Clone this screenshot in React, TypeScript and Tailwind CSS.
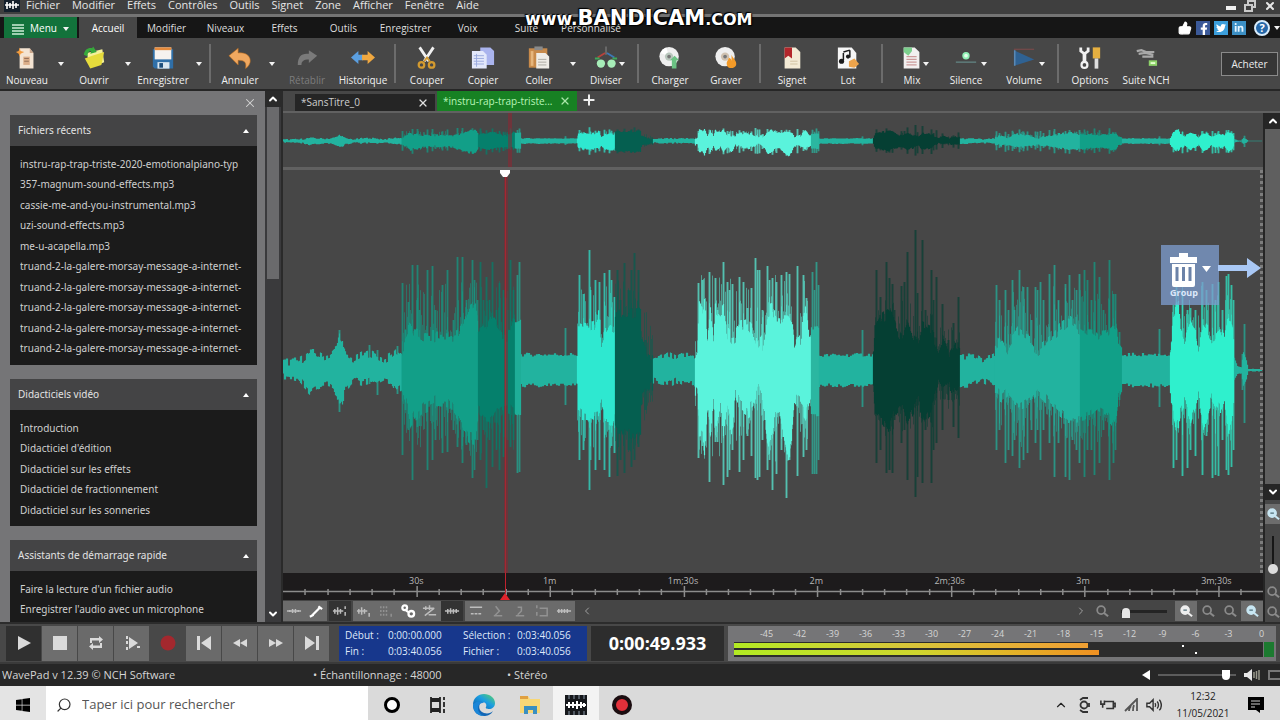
import React from "react";
import { ChevronDown, ChevronUp, Search, X, Plus, ThumbsUp } from "lucide-react";
import { FaFacebookF, FaTwitter, FaLinkedinIn, FaWindows } from "react-icons/fa";

type Pt = [number, number, number];
type Segment = { x0: number; x1: number; color: string; noise: number; fuzz?: number; core: Pt[]; spikes?: Pt[] };

const TEAL = "#22b39f";

/* Each point is [x, height above the axis, height below the axis]. */
const SEGMENTS: Segment[] = [
  {
    x0: 283, x1: 402, color: TEAL, noise: 9,
    core: [[283, 7, 6], [298, 8, 8], [303, 11, 14], [309, 16, 20], [314, 16, 16], [322, 12, 13], [329, 14, 14], [334, 18, 18], [337, 26, 28], [339, 34, 36], [341, 32, 33], [343, 20, 26], [346, 12, 16], [354, 9, 8], [362, 14, 11], [369, 16, 10], [376, 13, 13], [384, 9, 9], [392, 14, 11], [396, 18, 18], [402, 14, 16]],
    spikes: [[339, 40, 42], [369, 25, 14], [377, 20, 25], [397, 24, 24]],
  },
  {
    x0: 402, x1: 478, color: "#129f88", noise: 14, fuzz: 88,
    core: [[402, 18, 18], [406, 34, 30], [410, 43, 50], [414, 34, 44], [424, 31, 36], [436, 32, 30], [448, 32, 32], [458, 34, 46], [464, 46, 60], [469, 62, 66], [475, 66, 68], [478, 36, 38]],
    spikes: [[402, 87, 85], [405, 40, 40], [408, 68, 60], [412, 105, 110], [417, 105, 57], [419, 60, 56], [427, 100, 100], [432, 104, 90], [435, 60, 70], [442, 85, 83], [447, 100, 82], [453, 50, 60], [457, 113, 77], [462, 113, 93], [466, 70, 75], [472, 110, 108], [474, 90, 100], [477, 70, 70]],
  },
  {
    x0: 478, x1: 515, color: "#05806c", noise: 12, fuzz: 90,
    core: [[478, 38, 40], [485, 42, 44], [490, 54, 48], [496, 42, 40], [502, 32, 36], [510, 33, 38], [515, 56, 42]],
    spikes: [[480, 108, 90], [483, 70, 60], [486, 93, 118], [489, 70, 70], [492, 108, 97], [496, 60, 80], [499, 87, 100], [503, 80, 87], [507, 60, 70], [510, 110, 77], [513, 80, 70]],
  },
  { x0: 515, x1: 521, color: "#1fae98", noise: 3, core: [[515, 48, 44], [521, 50, 46]], spikes: [[517, 95, 103], [519, 108, 102]] },
  { x0: 521, x1: 577, color: TEAL, noise: 4, core: [[521, 15, 15], [577, 15, 15]], spikes: [[565, 42, 35]] },
  {
    x0: 577, x1: 615, color: "#2ee8d0", noise: 12, fuzz: 85,
    core: [[577, 16, 18], [578, 44, 40], [582, 42, 43], [588, 40, 44], [593, 42, 46], [598, 54, 44], [601, 26, 34], [605, 36, 44], [609, 42, 56], [612, 40, 54], [615, 38, 40]],
    spikes: [[579, 95, 90], [583, 76, 80], [589, 120, 120], [590, 80, 90], [595, 90, 100], [599, 88, 90], [604, 97, 100], [609, 100, 107], [611, 90, 76], [614, 73, 83]],
  },
  {
    x0: 615, x1: 653, color: "#055f50", noise: 12, fuzz: 92,
    core: [[615, 54, 56], [622, 52, 58], [634, 56, 66], [640, 56, 58], [641, 26, 28], [647, 14, 20], [653, 10, 14]],
    spikes: [[617, 100, 106], [620, 70, 90], [624, 107, 103], [628, 80, 80], [631, 100, 97], [634, 117, 90], [638, 100, 77], [645, 30, 40]],
  },
  { x0: 653, x1: 695, color: TEAL, noise: 8, core: [[653, 9, 10], [668, 14, 14], [676, 10, 10], [682, 14, 13], [695, 13, 12]] },
  {
    x0: 695, x1: 811, color: "#5af3dc", noise: 18, fuzz: 96,
    core: [[695, 16, 16], [697, 20, 18], [699, 64, 72], [702, 56, 56], [704, 64, 78], [707, 30, 36], [710, 62, 64], [713, 20, 28], [715, 60, 60], [720, 54, 32], [723, 58, 62], [727, 36, 36], [732, 30, 58], [735, 32, 26], [740, 40, 36], [747, 42, 40], [752, 36, 36], [757, 20, 16], [762, 26, 28], [768, 58, 82], [772, 60, 62], [775, 44, 46], [780, 44, 42], [784, 58, 72], [787, 58, 84], [791, 52, 72], [794, 20, 28], [800, 30, 34], [805, 60, 44], [809, 32, 32], [811, 28, 26]],
    spikes: [[698, 87, 88], [702, 90, 76], [709, 98, 112], [715, 92, 72], [717, 60, 72], [723, 108, 115], [727, 88, 107], [729, 80, 100], [732, 86, 80], [739, 93, 102], [743, 88, 90], [747, 62, 66], [751, 82, 86], [755, 112, 108], [757, 100, 110], [759, 100, 107], [762, 60, 70], [767, 104, 100], [769, 90, 90], [772, 92, 120], [776, 88, 104], [781, 95, 80], [786, 98, 128], [789, 96, 90], [797, 104, 106], [803, 95, 87], [806, 72, 80]],
  },
  { x0: 811, x1: 819, color: "#2bb7a1", noise: 4, core: [[811, 42, 44], [819, 42, 44]], spikes: [[812, 98, 104], [814, 80, 104], [816, 108, 104], [818, 85, 90]] },
  { x0: 819, x1: 873, color: TEAL, noise: 4, core: [[819, 14, 15], [873, 15, 15]], spikes: [[862, 40, 37]] },
  {
    x0: 873, x1: 960, color: "#053f33", noise: 12, fuzz: 70,
    core: [[873, 16, 18], [875, 42, 38], [880, 50, 44], [888, 56, 58], [893, 48, 44], [897, 38, 38], [902, 30, 32], [907, 44, 50], [913, 32, 38], [918, 30, 28], [922, 42, 50], [930, 38, 40], [935, 28, 24], [938, 14, 8], [943, 26, 20], [949, 12, 12], [955, 24, 24], [960, 20, 20]],
    spikes: [[876, 100, 93], [880, 73, 80], [886, 108, 103], [889, 92, 100], [892, 86, 103], [894, 60, 50], [901, 84, 73], [904, 88, 60], [907, 118, 110], [915, 140, 127], [917, 77, 107], [922, 130, 113], [925, 60, 60], [931, 100, 113], [933, 70, 80], [936, 93, 73], [942, 66, 60], [948, 30, 30], [953, 47, 57], [958, 73, 68]],
  },
  { x0: 960, x1: 995, color: TEAL, noise: 7, core: [[960, 13, 15], [973, 13, 13], [982, 9, 9], [995, 13, 15]] },
  {
    x0: 995, x1: 1080, color: TEAL, noise: 13, fuzz: 84,
    core: [[995, 22, 22], [1002, 27, 26], [1007, 18, 22], [1010, 27, 30], [1017, 36, 36], [1030, 27, 30], [1037, 17, 21], [1047, 27, 30], [1057, 38, 38], [1068, 48, 48], [1080, 39, 46]],
    spikes: [[996, 85, 80], [999, 70, 60], [1005, 80, 93], [1008, 60, 80], [1012, 90, 86], [1014, 60, 70], [1019, 100, 98], [1023, 83, 90], [1027, 83, 83], [1031, 50, 60], [1035, 83, 73], [1037, 80, 60], [1040, 88, 90], [1043, 70, 60], [1049, 96, 73], [1054, 105, 107], [1058, 70, 73], [1065, 86, 107], [1069, 95, 110], [1072, 70, 70], [1076, 80, 80], [1079, 96, 93]],
  },
  {
    x0: 1080, x1: 1122, color: "#11a088", noise: 9, fuzz: 80,
    core: [[1080, 41, 47], [1092, 37, 43], [1098, 32, 38], [1106, 36, 42], [1112, 42, 52], [1116, 40, 42], [1118, 22, 24], [1122, 16, 16]],
    spikes: [[1084, 100, 107], [1087, 90, 80], [1091, 70, 80], [1094, 108, 105], [1099, 93, 93], [1103, 60, 60], [1109, 110, 110], [1113, 76, 93], [1115, 76, 80], [1119, 38, 30]],
  },
  { x0: 1122, x1: 1170, color: TEAL, noise: 4, core: [[1122, 15, 15], [1170, 15, 15]], spikes: [[1159, 41, 37]] },
  {
    x0: 1170, x1: 1234, color: "#2ff0cd", noise: 12, fuzz: 85,
    core: [[1170, 18, 18], [1172, 38, 38], [1175, 64, 56], [1178, 62, 52], [1180, 36, 38], [1184, 28, 30], [1190, 43, 48], [1195, 34, 34], [1198, 20, 24], [1203, 44, 56], [1207, 39, 43], [1211, 26, 26], [1216, 34, 34], [1220, 40, 38], [1224, 28, 24], [1228, 54, 58], [1232, 42, 44], [1234, 18, 18]],
    spikes: [[1173, 65, 98], [1176, 85, 90], [1182, 80, 106], [1187, 60, 98], [1190, 62, 80], [1195, 60, 86], [1202, 88, 105], [1206, 80, 66], [1212, 86, 108], [1215, 70, 105], [1218, 88, 106], [1222, 60, 70], [1226, 94, 100], [1228, 96, 105], [1231, 85, 97], [1233, 70, 80]],
  },
  { x0: 1234, x1: 1262, color: TEAL, noise: 1, core: [[1234, 12, 10], [1237, 4, 4], [1241, 3, 3], [1243, 18, 16], [1246, 10, 10], [1248, 1, 1], [1262, 0, 1]], spikes: [[1244, 46, 53], [1242, 16, 20]] },
];

function jitter(x: number) {
  const v = Math.sin(x * 12.9898) * 43758.5453;
  return v - Math.floor(v);
}

function heightsAt(s: Segment, x: number) {
  let i = 0;
  while (i < s.core.length - 2 && s.core[i + 1][0] < x) i += 1;
  const [ax, au, ad] = s.core[i];
  const [bx, bu, bd] = s.core[i + 1];
  const t = Math.min(1, Math.max(0, (x - ax) / (bx - ax)));
  return [au + (bu - au) * t, ad + (bd - ad) * t];
}

function corePath(s: Segment, axis: number, scale: number) {
  let d = "";
  for (let x = s.x0; x < s.x1; x += 1) {
    const [u, l] = heightsAt(s, x);
    const up = Math.max(1, u + (jitter(Math.floor(x / 2)) - 0.4) * s.noise) * scale;
    const down = Math.max(1, l + (jitter(Math.floor(x / 2) + 500) - 0.4) * s.noise) * scale;
    d += `M${x + 0.5} ${axis - up}V${axis + down}`;
  }
  return d;
}

function fuzzPath(s: Segment, axis: number, scale: number) {
  if (!s.fuzz) return "";
  let d = "";
  for (let x = s.x0; x < s.x1; x += 1) {
    const [u, l] = heightsAt(s, x);
    const a = jitter(x + 90);
    const b = a * 0.7 + jitter(x + 900) * 0.3;
    const reach = u < 30 ? s.fuzz * 0.7 : s.fuzz;
    const up = u + Math.max(0, reach - u) * a * a;
    const down = l + Math.max(0, reach - l) * b * b;
    d += `M${x + 0.5} ${axis - up * scale}V${axis + down * scale}`;
  }
  return d;
}

function spikePath(s: Segment, axis: number, scale: number) {
  return (s.spikes ?? []).map(([x, u, l]) => `M${x + 0.5} ${axis - u * scale}V${axis + l * scale}`).join("");
}

function Wave({ axis, core, spike, box }: { axis: number; core: number; spike: number; box: string }) {
  return (
    <svg viewBox={box} preserveAspectRatio="none" className="block h-full w-full" aria-hidden="true">
      {SEGMENTS.map((s) => (
        <g key={s.x0} stroke={s.color}>
          <path d={fuzzPath(s, axis, spike)} strokeWidth="1" opacity="0.5" />
          <path d={spikePath(s, axis, spike)} strokeWidth="2.4" opacity="0.35" />
          <path d={spikePath(s, axis, spike)} strokeWidth="1.3" opacity="0.55" />
          <path d={corePath(s, axis, core)} strokeWidth="1.2" />
        </g>
      ))}
    </svg>
  );
}

const ICONS: Record<string, React.ReactNode> = {
  new: (
    <>
      <path d="M5 2h11l4 5v17H5z" fill="#f4e4d2" />
      <path d="M16 2l4 5h-4z" fill="#c9a58a" />
      <path d="M9 11h7v9H9z" fill="#dcae88" />
      <path d="M10 13h5M10 16h5" stroke="#8c6a55" />
      <path d="M5 1l1 4 4 1-4 2-1 3-1-3-3-2 3-1z" fill="#f29b3d" />
    </>
  ),
  open: (
    <>
      <path d="M5 7l17-4 2 14-15 6z" fill="#f5f19a" />
      <path d="M3 13l8-3 13-4-3 14-12 4z" fill="#e6dc3c" />
      <path d="M2 9C3 3 7 1 11 2l1-2 4 6-7 2 1-3C7 5 6 7 6 11z" fill="#37a93c" />
    </>
  ),
  save: (
    <>
      <path d="M2 3h22v21H4l-2-2z" fill="#2f6fa8" />
      <path d="M4 1h18v13H4z" fill="#f6f2ef" />
      <path d="M4 1h18v3H4z" fill="#e58a3c" />
      <path d="M7 17h13v7H7z" fill="#d9e6f0" />
      <path d="M9 18h4v5H9z" fill="#1d4d7a" />
    </>
  ),
  undo: <path d="M1 10l10-8v5c9-1 14 4 13 10-1 3-2 5-5 7 1-6 0-9-8-9v5z" fill="#f0a860" stroke="#b86a1c" strokeWidth="0.6" />,
  redo: <path d="M24 10L15 4v4c-8-1-12 3-12 12l4 0c0-4 2-6 8-6v4z" fill="#7a7a7a" />,
  history: (
    <>
      <path d="M0 12l8-7v4h5v6H8v4z" fill="#5b9fe0" />
      <path d="M26 12l-8-7v4h-6v6h6v4z" fill="#f0a840" />
    </>
  ),
  cut: (
    <>
      <path d="M5 1l10 15M20 1L10 16" stroke="#f1f1f1" strokeWidth="3" />
      <circle cx="7" cy="20" r="3" fill="none" stroke="#d39a2f" strokeWidth="2.4" />
      <circle cx="18" cy="20" r="3" fill="none" stroke="#d39a2f" strokeWidth="2.4" />
      <path d="M10 16l3-4 3 4" stroke="#d39a2f" strokeWidth="2" fill="none" />
    </>
  ),
  copy: (
    <>
      <path d="M10 1h11l4 4v15H10z" fill="#aab4ee" />
      <path d="M1 5h12l4 4v15H1z" fill="#e3e8fb" />
      <path d="M3 10h11M3 13h11M3 16h11M3 19h11M6 8v14" stroke="#98a7dc" />
    </>
  ),
  paste: (
    <>
      <path d="M2 2h20v21H2z" fill="#c88a4a" />
      <path d="M8 0h9v4H8z" fill="#8a8a8a" />
      <path d="M4 5h3v16H4z" fill="#e6b67c" />
      <path d="M10 7h10l4 4v13H10z" fill="#efece6" />
      <path d="M12 14h9M12 17h9M12 20h9" stroke="#aaa79f" />
    </>
  ),
  split: (
    <>
      <path d="M13 0v9" stroke="#777" strokeWidth="1.5" />
      <path d="M12 7L4 12" stroke="#b8423c" strokeWidth="2" />
      <path d="M14 7l8 5" stroke="#3c78b8" strokeWidth="2" />
      <circle cx="7.500" cy="18.500" r="4.500" fill="#a7edb8" />
      <circle cx="19" cy="18.500" r="4.500" fill="#a7edb8" />
      <path d="M1 13h5M20 13h5" stroke="#3fa85a" strokeWidth="2" />
    </>
  ),
  disc: (
    <>
      <circle cx="12" cy="11" r="10.5" fill="#eeeeee" />
      <path d="M12 11L3 7a10 10 0 016-6z" fill="#fff" />
      <circle cx="12" cy="11" r="4.5" fill="#b9c7bd" />
      <circle cx="12" cy="11" r="2" fill="#777" />
      <path d="M13 15l5-5 5 5h-3v9h-5v-9z" fill="#6bc283" />
    </>
  ),
  burn: (
    <>
      <circle cx="12" cy="11" r="10.5" fill="#eeeeee" />
      <circle cx="12" cy="11" r="4.5" fill="#cfc1b0" />
      <circle cx="12" cy="11" r="2" fill="#777" />
      <path d="M19 9c1 4 6 6 5 11-1 4-9 5-10 0-1-4 2-5 2-8 2 1 3 2 3 4z" fill="#f39a28" />
    </>
  ),
  bookmark: (
    <>
      <path d="M5 1h12l5 5v18H5z" fill="#f3ead5" />
      <path d="M5 1h8v12l-4-3-4 3z" fill="#b3262b" />
      <path d="M11 16h8M11 19h8" stroke="#cfbfa0" />
    </>
  ),
  batch: (
    <>
      <path d="M2 1h15l5 6v17H2z" fill="#f6f6f6" />
      <path d="M8 7v8M15 4v8M8 6l7-2" stroke="#1b1b1b" strokeWidth="1.6" />
      <circle cx="6" cy="16" r="2.8" fill="#1b1b1b" />
      <circle cx="13" cy="11" r="2.2" fill="#1b1b1b" />
      <path d="M14 16l6-3 5 6-5 4-6-1z" fill="#eda44c" />
    </>
  ),
  mix: (
    <>
      <path d="M4 1h12l5 5v18H4z" fill="#f2f0f0" />
      <path d="M4 1h9v4l-4 5-5-4z" fill="#7ccf8d" />
      <path d="M7 11h11M7 14h11M7 17h11M7 20h11" stroke="#cc9a9a" strokeWidth="1.5" />
    </>
  ),
  silence: (
    <>
      <path d="M2 17h22" stroke="#5f7d7c" strokeWidth="1.6" />
      <circle cx="13" cy="10" r="4" fill="#8ff0b4" />
      <circle cx="13" cy="10" r="2" fill="#e5ffec" />
    </>
  ),
  volume: (
    <>
      <path d="M2 4l22 10-22 7z" fill="#2f6293" />
      <path d="M2 3h22" stroke="#874a4a" strokeWidth="1" />
      <path d="M3 4v17" stroke="#5e8db8" strokeWidth="1.5" />
    </>
  ),
  options: (
    <>
      <path d="M7 8v10" stroke="#f2f2f2" strokeWidth="4" />
      <path d="M3 1v4l4 3 4-3V1" stroke="#f2f2f2" strokeWidth="3" fill="none" />
      <circle cx="7" cy="20" r="3.2" fill="none" stroke="#f2f2f2" strokeWidth="2.4" />
      <path d="M16 1h8v12h-8z" fill="#e6b040" />
      <path d="M18 13h4v11h-4z" fill="#dedede" />
    </>
  ),
  suite: (
    <>
      <path d="M3 5l5-1 5 2 9 0M5 8l7-1 9 2M9 11h12" stroke="#a9a9a9" strokeWidth="2.4" fill="none" />
      <path d="M16 15h9v6h-9z" fill="#8ed36a" />
      <path d="M18 17h5v2h-5z" fill="#e5ffd0" />
    </>
  ),
};

function Caret({ className = "" }: { className?: string }) {
  return (
    <svg viewBox="0 0 6 4" className={`h-1 w-1.5 ${className}`} aria-hidden="true">
      <path d="M0 0h6L3 4z" fill="#f2f2f2" />
    </svg>
  );
}

type Tool = { icon: string; label: string; w: string; menu?: "side" | "inner"; off?: boolean; sep?: boolean };
const TOOLS: Tool[] = [
  { icon: "new", label: "Nouveau", w: "w-[54px]", menu: "side" },
  { icon: "open", label: "Ouvrir", w: "w-[54px]", menu: "side" },
  { icon: "save", label: "Enregistrer", w: "w-[58px]", menu: "side", sep: true },
  { icon: "undo", label: "Annuler", w: "w-[50px]", menu: "side" },
  { icon: "redo", label: "Rétablir", w: "w-[58px]", off: true },
  { icon: "history", label: "Historique", w: "w-[54px]", sep: true },
  { icon: "cut", label: "Couper", w: "w-[54px]" },
  { icon: "copy", label: "Copier", w: "w-[58px]" },
  { icon: "paste", label: "Coller", w: "w-[54px]", menu: "side" },
  { icon: "split", label: "Diviser", w: "w-[54px]", menu: "inner", sep: true },
  { icon: "disc", label: "Charger", w: "w-[54px]" },
  { icon: "burn", label: "Graver", w: "w-[58px]", sep: true },
  { icon: "bookmark", label: "Signet", w: "w-[54px]" },
  { icon: "batch", label: "Lot", w: "w-[58px]", sep: true },
  { icon: "mix", label: "Mix", w: "w-[50px]", menu: "inner" },
  { icon: "silence", label: "Silence", w: "w-[58px]", menu: "inner" },
  { icon: "volume", label: "Volume", w: "w-[58px]", menu: "inner", sep: true },
  { icon: "options", label: "Options", w: "w-[54px]" },
  { icon: "suite", label: "Suite NCH", w: "w-[58px]" },
];

function Ribbon() {
  return (
    <div className="flex h-[53px] shrink-0 items-stretch border-b-2 border-[#262626] bg-[#474747]">
      {TOOLS.map((t) => (
        <React.Fragment key={t.label}>
          <button
            disabled={t.off}
            className={`relative flex shrink-0 flex-col items-center gap-0.5 whitespace-nowrap pt-2 text-[10px] leading-4 ${t.w} ${t.off ? "text-[#7c7c7c]" : "text-[#f0f0f0]"}`}
          >
            <svg viewBox="0 0 26 25" className="h-6 w-6 shrink-0" fill="none" aria-hidden="true">{ICONS[t.icon]}</svg>
            <span>{t.label}</span>
            {t.menu === "inner" && <Caret className="absolute right-2 top-6" />}
          </button>
          {t.menu === "side" && (
            <button aria-label={`Options de ${t.label}`} className="flex w-[13px] shrink-0 justify-center pt-6">
              <Caret />
            </button>
          )}
          {t.sep && (
            <div className="flex w-2.5 shrink-0 justify-center py-1.5">
              <div className="w-0.5 bg-[#6c6c6c]" />
            </div>
          )}
        </React.Fragment>
      ))}
      <div className="flex-1" />
      <button className="mr-0.5 mt-3.5 h-6 w-[57px] border border-[#8a8a8a] bg-[#363636] text-[10px] text-[#ededed]">Acheter</button>
    </div>
  );
}

const MENUS = ["Fichier", "Modifier", "Effets", "Contrôles", "Outils", "Signet", "Zone", "Afficher", "Fenêtre", "Aide"];

function MenuBar() {
  return (
    <div className="relative flex h-[17px] shrink-0 items-start border-b-[3px] border-[#747474] bg-[#3f3f3f] text-[11px] leading-[10px] text-[#e6e6e6]">
      <svg viewBox="0 0 16 12" className="ml-1 h-3 w-4" aria-hidden="true">
        <path d="M0 0h16v12H0z" fill="#14202c" />
        <path d="M1 5h14M3 2v7M6 3v5M9 1v8M12 3v5" stroke="#fff" strokeWidth="1.6" />
      </svg>
      <nav className="flex gap-3 pl-1.5">
        {MENUS.map((m) => <a key={m} href="#" className="block">{m}</a>)}
      </nav>
      <div className="ml-auto flex gap-2 pr-1">
        <button aria-label="Réduire" className="h-2.5 w-2.5 border-b-4 border-[#f0f0f0]" />
        <button aria-label="Restaurer">
          <svg viewBox="0 0 12 12" className="h-3 w-3" fill="none" stroke="#c9c9c9" strokeWidth="2"><path d="M4 4V1h7v6H8M1 5h7v6H1z" /></svg>
        </button>
        <button aria-label="Fermer"><X className="h-3 w-3" strokeWidth={4} /></button>
      </div>
      <div className="absolute left-[525px] top-0.5 z-10 flex items-baseline whitespace-nowrap font-['DejaVu_Sans'] font-bold text-white [text-shadow:0_0_2px_#000,1px_1px_1px_#000,-1px_-1px_1px_#000]">
        <span className="text-[17px] leading-8">www.</span>
        <span className="text-[21px] leading-8">BANDICAM</span>
        <span className="text-[16px] leading-8">.COM</span>
      </div>
    </div>
  );
}

const TABS: [string, string][] = [
  ["Modifier", "w-[59px]"], ["Niveaux", "w-[59px]"], ["Effets", "w-[59px]"], ["Outils", "w-[59px]"],
  ["Enregistrer", "w-[65px]"], ["Voix", "w-[59px]"], ["Suite", "w-[59px]"], ["Personnalisé", "w-[70px]"],
];

function TabRow() {
  return (
    <div className="flex h-[21px] shrink-0 items-stretch bg-[#161616] pl-1 text-[10px] text-[#dedede]">
      <button className="flex w-[73px] items-center justify-center gap-1.5 bg-[#12723b] pt-0.5 text-white">
        <svg viewBox="0 0 12 11" className="h-3 w-3" aria-hidden="true"><path d="M0 1.5h12M0 4.5h12M0 7.5h12M0 10.5h12" stroke="#cdeed8" strokeWidth="1.6" /></svg>
        Menu
        <Caret />
      </button>
      <button className="ml-0.5 w-[58px] bg-[#474747] pt-0.5 text-white">Accueil</button>
      {TABS.map(([t, w]) => <button key={t} className={`pt-0.5 ${w}`}>{t}</button>)}
      <div className="ml-auto flex items-center gap-1">
        <ThumbsUp className="h-3.5 w-3.5" fill="#fff" color="#fff" />
        <a href="#" aria-label="Facebook" className="flex h-3.5 w-3.5 items-end justify-end bg-[#3b5998]"><FaFacebookF className="h-3 w-3" color="#fff" /></a>
        <a href="#" aria-label="Twitter" className="flex h-3.5 w-3.5 items-center justify-center bg-[#3b9edb]"><FaTwitter className="h-2.5 w-2.5" color="#fff" /></a>
        <a href="#" aria-label="LinkedIn" className="flex h-3.5 w-3.5 items-center justify-center bg-[#3c8fc4]"><FaLinkedinIn className="h-2.5 w-2.5" color="#e6f4ff" /></a>
        <button className="ml-1 flex h-4 w-4 items-center justify-center rounded-full border-2 border-[#d9ecfb] bg-[#2567a8] text-[11px] font-bold leading-3 text-white">?</button>
        <Caret />
      </div>
    </div>
  );
}

const TRUAND = "truand-2-la-galere-morsay-message-a-internet-";
const PANELS: [string, string[]][] = [
  ["Fichiers récents", ["instru-rap-trap-triste-2020-emotionalpiano-typ", "357-magnum-sound-effects.mp3", "cassie-me-and-you-instrumental.mp3", "uzi-sound-effects.mp3", "me-u-acapella.mp3", TRUAND, TRUAND, TRUAND, TRUAND, TRUAND]],
  ["Didacticiels vidéo", ["Introduction", "Didacticiel d'édition", "Didacticiel sur les effets", "Didacticiel de fractionnement", "Didacticiel sur les sonneries"]],
  ["Assistants de démarrage rapide", ["Faire la lecture d'un fichier audio", "Enregistrer l'audio avec un microphone"]],
];

function Sidebar() {
  return (
    <aside className="flex w-[283px] shrink-0 overflow-hidden">
      <div className="flex min-w-0 flex-1 flex-col overflow-hidden bg-[#757577] pl-2.5 pr-2">
        <div className="flex h-6 shrink-0 items-center justify-end">
          <button aria-label="Fermer le panneau"><X className="h-3.5 w-3.5" color="#d5d5d5" strokeWidth={1.8} /></button>
        </div>
        <div className="flex flex-col gap-3.5 font-['Noto_Sans','Open_Sans',sans-serif]">
          {PANELS.map(([title, rows]) => (
            <section key={title}>
              <h2 className="flex h-[31px] items-center justify-between bg-[#444445] px-2 text-[10px] text-[#e2e2e2]">
                {title}
                <svg viewBox="0 0 6 4" className="h-1 w-1.5" aria-hidden="true"><path d="M0 4h6L3 0z" fill="#fff" /></svg>
              </h2>
              <ul className="bg-[#1b1b1b] px-2.5 pb-1.5 pt-2 text-[10px] text-[#cfcfcf]">
                {rows.map((r, i) => (
                  <li key={i} className="h-[20px] overflow-hidden whitespace-nowrap leading-[20px] [&:nth-child(2n)]:h-[21px]">
                    <a href="#">{r}</a>
                  </li>
                ))}
              </ul>
            </section>
          ))}
        </div>
      </div>
      <div className="flex w-[18px] shrink-0 flex-col items-center border-r-2 border-[#2a2a2a] bg-[#3a3a3c]">
        <div className="flex h-4 w-full items-center justify-center bg-[#2a2a2a]"><ChevronUp className="h-3 w-3" color="#fff" strokeWidth={4} /></div>
        <div className="h-[172px] w-3 bg-[#6a6a6c]" />
        <div className="flex-1" />
        <div className="flex h-4 w-full items-center justify-center"><ChevronDown className="h-3 w-3" color="#fff" strokeWidth={4} /></div>
      </div>
    </aside>
  );
}

type EditTool = { d: string; lit: boolean; bright?: boolean; dim?: boolean; gap?: boolean };
const EDIT_TOOLS: EditTool[] = [
  { lit: true, d: "M1 8h15M4 7v2M7 6v4M10 6v4M13 7v2" },
  { lit: true, bright: true, d: "M4 13L13 4M2 14l4-2M11 3l4 3" },
  { lit: false, gap: true, d: "M1 8h11M3 6v5M6 4v8M9 6v5M14 3v3M14 9v4" },
  { lit: true, gap: true, d: "M1 8h11M3 6v5M6 4v8M9 6v5M14 10v4" },
  { lit: true, dim: true, d: "M3 3v2M6 3v2M9 3v2M3 7v2M6 7v2M9 7v2M3 11v2M6 11v2M9 11v2M14 11v3" },
  { lit: true, bright: true, d: "M5 2a2.500 2.500 0 100 5 2.500 2.500 0 000-5zM6 7l4 3M12 8a2.800 2.800 0 100 6 2.800 2.800 0 000-6z" },
  { lit: true, d: "M1 5h12M4 3v4M8 2v5M3 13l10-8M7 12h8" },
  { lit: false, d: "M1 8h15M4 6v5M7 5v6M10 6v5M13 6v4" },
  { lit: true, gap: true, d: "M2 4h13M3 11h3M7 11h3M11 11h3" },
  { lit: true, dim: true, d: "M4 13h9M6 3l4 5-5 5" },
  { lit: true, dim: true, d: "M4 13h9M6 4h4v4l-4 4" },
  { lit: true, dim: true, d: "M3 2v3M3 9v4M6 5h8v8H6" },
  { lit: true, d: "M1 8h15M3 6v4M6 6v4M9 6v4M12 6v4" },
];

function ZoomButton({ label, lit = false, tone = "#8a8a8a" }: { label: string; lit?: boolean; tone?: string }) {
  return (
    <button aria-label={label} className={`flex h-5 w-[22px] shrink-0 items-center justify-center ${lit ? "bg-[#6d6d6d]" : ""}`}>
      <svg viewBox="0 0 16 16" className="h-3.5 w-3.5" aria-hidden="true">
        <circle cx="7" cy="7" r="4.5" fill={lit ? tone : "none"} stroke={tone} strokeWidth="2" />
        <path d="M10 10l5 4" stroke={tone} strokeWidth="2.4" />
        {lit && <path d="M5 7h4" stroke="#4b6a75" strokeWidth="1.4" />}
      </svg>
    </button>
  );
}

const TIMES = ["30s", "1m", "1m;30s", "2m", "2m;30s", "3m", "3m;30s"];

function Timeline() {
  let d = "M0 5.500H979";
  for (let i = 1; i < 44; i += 1) {
    const x = Math.round(i * 22.26);
    d += i % 6 === 0 ? `M${x} 0V11` : `M${x} 3V9`;
  }
  return (
    <div className="flex h-[27px] shrink-0 flex-col overflow-hidden bg-[#1d1b1c] pt-0.5">
      <div className="flex pl-[6.8%] text-[9px] leading-[11px] text-[#b8b8b8]">
        {TIMES.map((t) => <span key={t} className="w-[14.6%] shrink-0 text-center">{t}</span>)}
      </div>
      <svg viewBox="0 0 979 12" preserveAspectRatio="none" className="h-3 w-full" fill="none" aria-hidden="true">
        <path d={d} stroke="#8c8c8c" strokeWidth="1.5" />
      </svg>
    </div>
  );
}

function Editor() {
  return (
    <section className="flex min-w-0 flex-1 flex-col bg-[#474747]">
      <div className="flex h-[22px] shrink-0 items-end border-b-2 border-[#616161] pl-3 text-[10px]">
        <button className="flex h-[17px] w-[140px] items-center justify-between bg-[#252525] pl-1.5 pr-1.5 text-[#cfcfcf]">
          *SansTitre_0 <X className="h-3 w-3" color="#e0e0e0" strokeWidth={2.4} />
        </button>
        <button className="ml-0.5 flex h-[20px] w-[140px] items-center justify-between bg-[#178123] px-1.5 text-[#b8f5b8]">
          *instru-rap-trap-triste... <X className="h-3 w-3" color="#a8e6a8" strokeWidth={2.4} />
        </button>
        <button aria-label="Nouvel onglet" className="ml-1 flex h-[22px] items-center"><Plus className="h-4 w-4" color="#f0f0f0" strokeWidth={3} /></button>
      </div>
      <div className="flex min-h-0 flex-1">
        <div className="flex min-w-0 flex-1 flex-col">
          <div className="relative h-[54px] shrink-0">
            <Wave axis={141} core={0.17} spike={0.115} box="283 113 980 54" />
            <div className="absolute inset-y-0 left-[23%] w-1 bg-[#a01c2c] opacity-45" />
          </div>
          <div className="relative min-h-0 flex-1 border-t-[3px] border-t-[#616161]">
            <Wave axis={370} core={1} spike={1} box="283 170 980 403" />
            <div className="absolute inset-y-0 right-0 border-r-[3px] border-dotted border-[#7d7d7d]" />
            <div className="absolute inset-y-0 left-[22.5%] w-1 bg-[#8e2430] opacity-50" />
            <div className="absolute inset-y-0 left-[22.65%] w-px bg-[#c0222e] opacity-70" />
            <svg viewBox="0 0 10 7" className="absolute left-[22.15%] top-0 h-[7px] w-2.5" aria-hidden="true"><path d="M0 0h10v3L7 7H3L0 3z" fill="#fff" /></svg>
            <div className="absolute right-11 top-[75px] flex h-[60px] w-[58px] flex-col items-center bg-[#7d9dd0]/75 pt-2">
              <svg viewBox="0 0 50 34" className="h-[34px] w-[50px]" aria-hidden="true">
                <path d="M5 4h9V0h9v4h9v6H5zM7 11h23v21a2 2 0 01-2 2H9a2 2 0 01-2-2z" fill="#fff" />
                <path d="M12 14v14M18.500 14v14M25 14v14" stroke="#6b82a8" strokeWidth="3" />
                <path d="M37 13h9l-4.500 6z" fill="#fff" />
              </svg>
              <span className="pr-3 text-[9px] font-bold leading-3 text-[#dce8fa]">Group</span>
            </div>
            <svg viewBox="0 0 44 22" className="absolute right-px top-[87px] h-[22px] w-11" aria-hidden="true">
              <path d="M0 8h29V1l14 10-14 10v-7H0z" fill="#a9c8f5" />
            </svg>
          </div>
          <div className="relative">
            <Timeline />
            <svg viewBox="0 0 10 7" className="absolute bottom-0 left-[22.15%] h-[7px] w-2.5" aria-hidden="true"><path d="M5 0l5 7H0z" fill="#e0242c" /></svg>
            <div className="absolute left-[22.65%] top-0 h-5 w-px bg-[#c0222e]" />
          </div>
          <div className="flex h-[22px] shrink-0 items-center bg-[#454545]">
            {EDIT_TOOLS.map((e, i) => (
              <button key={i} aria-label={`Outil ${i + 1}`} className={`flex h-5 w-[22px] shrink-0 items-center justify-center ${e.lit ? "bg-[#6b6b6b]" : "bg-[#333]"} ${e.gap ? "ml-0.5" : ""}`}>
                <svg viewBox="0 0 17 16" className="h-4 w-4" fill="none" aria-hidden="true">
                  <path d={e.d} stroke={e.bright ? "#fff" : e.dim ? "#929292" : "#bdbdbd"} strokeWidth={e.bright ? 2.4 : 1.6} />
                </svg>
              </button>
            ))}
            <ChevronDown className="ml-1.5 h-3 w-3 rotate-90" color="#a0a0a0" />
            <div className="flex-1" />
            <ChevronDown className="mr-1 h-3 w-3 -rotate-90" color="#a0a0a0" />
            <ZoomButton label="Zoom arrière" />
            <input
              type="range" min={0} max={100} defaultValue={2} aria-label="Zoom horizontal"
              className="mx-2 h-3.5 w-[46px] appearance-none bg-transparent [&::-webkit-slider-runnable-track]:h-[3px] [&::-webkit-slider-runnable-track]:bg-[#242424] [&::-webkit-slider-thumb]:-mt-0.5 [&::-webkit-slider-thumb]:h-2.5 [&::-webkit-slider-thumb]:w-2 [&::-webkit-slider-thumb]:appearance-none [&::-webkit-slider-thumb]:rounded-t-full [&::-webkit-slider-thumb]:bg-[#e6e6e6]"
            />
            <ZoomButton label="Zoom avant" lit tone="#eeeeee" />
            <ZoomButton label="Zoom sélection" />
            <ZoomButton label="Zoom début" />
            <ZoomButton label="Zoom complet" lit tone="#c8e6f2" />
          </div>
        </div>
        <div className="flex w-[17px] shrink-0 flex-col items-center overflow-hidden border-l-2 border-[#252525] bg-[#474747]">
          <div className="flex h-4 w-full items-center justify-center bg-[#262626]"><ChevronUp className="h-3 w-3" color="#fff" strokeWidth={4} /></div>
          <div className="w-full flex-1 bg-[#5f5f5f]" />
          <div className="mb-1 flex h-4 w-full items-center justify-center bg-[#262626]"><ChevronDown className="h-3 w-3" color="#fff" strokeWidth={4} /></div>
          <ZoomButton label="Zoom vertical" lit tone="#c8e6f2" />
          <div className="mt-3 h-7 w-0.5 bg-[#161616]" />
          <div className="mb-2 h-2.5 w-2.5 rounded-full bg-[#dcdcdc]" />
          <ZoomButton label="Zoom vertical arrière" />
          <ZoomButton label="Zoom vertical complet" />
        </div>
      </div>
    </section>
  );
}

const TRANSPORT: { label: string; node: React.ReactNode; bg: string }[] = [
  { label: "Lecture", bg: "bg-[#303030]", node: <path d="M3 2l13 7-13 7z" /> },
  { label: "Arrêt", bg: "bg-[#6e6e6e]", node: <path d="M2 2h14v14H2z" /> },
  { label: "Boucle", bg: "bg-[#6a6a6a]", node: <path d="M3 4h9V2l4 3.500L12 9V6.500H5V9H3zM15 14H6v2l-4-3.500L6 9v2.500h7V9h2z" /> },
  { label: "Lecture de la sélection", bg: "bg-[#6a6a6a]", node: <path d="M3 2h2v3H3zM3 7h2v3H3zM3 13h2v3H3zM6 3l9 6-9 6zM14 12h3v2h-3z" /> },
  { label: "Enregistrement", bg: "bg-[#484848]", node: <circle cx="9" cy="9" r="7.500" fill="#a3282e" /> },
  { label: "Début", bg: "bg-[#6a6a6a]", node: <path d="M2 2h3v14H2zM16 2v14L6 9z" /> },
  { label: "Reculer", bg: "bg-[#6a6a6a]", node: <path d="M9 5v8L2 9zM16 5v8L9 9z" /> },
  { label: "Avancer", bg: "bg-[#6a6a6a]", node: <path d="M2 5v8l7-4zM9 5v8l7-4z" /> },
  { label: "Fin", bg: "bg-[#6a6a6a]", node: <path d="M2 2v14l10-7zM13 2h3v14h-3z" /> },
];
const DB = ["-45", "-42", "-39", "-36", "-33", "-30", "-27", "-24", "-21", "-18", "-15", "-12", "-9", "-6", "-3", "0"];

function Transport() {
  return (
    <div className="flex h-10 shrink-0 items-center border-t-2 border-[#2c2c2c] bg-[#484848] pl-1.5 pr-1">
      <div className="flex gap-px">
        {TRANSPORT.map((t) => (
          <button key={t.label} aria-label={t.label} className={`flex h-[35px] w-[35px] items-center justify-center ${t.bg}`}>
            <svg viewBox="0 0 18 18" className="h-[18px] w-[18px]" fill="#dadada" aria-hidden="true">{t.node}</svg>
          </button>
        ))}
      </div>
      <dl className="ml-2.5 grid h-[35px] w-[248px] shrink-0 grid-cols-[43px_75px_54px_1fr] content-center bg-[#17378c] pl-1.5 text-[10px] leading-[16px] text-[#dfe8fa]">
        <dt>Début :</dt><dd>0:00:00.000</dd><dt>Sélection :</dt><dd>0:03:40.056</dd>
        <dt>Fin :</dt><dd>0:03:40.056</dd><dt>Fichier :</dt><dd>0:03:40.056</dd>
      </dl>
      <output className="ml-1 flex h-[35px] w-[133px] shrink-0 items-center justify-center bg-[#2d2d2d] text-[18px] font-bold text-white">0:00:49.933</output>
      <div className="ml-1 flex h-[35px] min-w-0 flex-1 flex-col bg-[#757577] px-0.5 pb-1">
        <div className="-mr-1 flex justify-end text-[9px] leading-4 text-[#d6d6d6]">
          {DB.map((v) => <span key={v} className="w-[33px] text-center">{v}</span>)}
        </div>
        <div className="flex flex-1 gap-px pl-1">
          <div className="flex flex-1 flex-col justify-center gap-0.5 bg-[#2c2c2c]">
            <div className="relative h-[5px]">
              <div className="h-full w-[67%] bg-linear-to-r from-[#b2ea22] via-[#d8c53a] to-[#ef9f33]" />
              <div className="absolute right-[15%] top-0.5 h-0.5 w-0.5 bg-white" />
            </div>
            <div className="relative h-[5px]">
              <div className="h-full w-[69%] bg-linear-to-r from-[#b2ea22] via-[#cfd62e] to-[#ef9022]" />
              <div className="absolute right-[12.500%] top-0.5 h-0.5 w-0.5 bg-white" />
            </div>
          </div>
          <div className="w-2.5 bg-[#1c7a30]" />
        </div>
      </div>
    </div>
  );
}

function StatusBar() {
  return (
    <div className="flex h-6 shrink-0 items-center border-t-2 border-[#3a3a3a] bg-[#272727] text-[11px] text-[#d6d6d6]">
      <span className="w-[313px] pl-0.5">WavePad v 12.39 © NCH Software</span>
      <span className="w-[194px]">• Échantillonnage : 48000</span>
      <span>• Stéréo</span>
      <div className="ml-auto flex items-center gap-2">
        <svg viewBox="0 0 8 10" className="h-2.5 w-2" aria-hidden="true"><path d="M8 0v10L0 5z" fill="#fff" /></svg>
        <input
          type="range" min={0} max={100} defaultValue={92} aria-label="Volume de lecture"
          className="h-3 w-[78px] appearance-none bg-transparent [&::-webkit-slider-runnable-track]:h-0.5 [&::-webkit-slider-runnable-track]:bg-[#5c5c5c] [&::-webkit-slider-thumb]:-mt-1 [&::-webkit-slider-thumb]:h-2.5 [&::-webkit-slider-thumb]:w-2 [&::-webkit-slider-thumb]:appearance-none [&::-webkit-slider-thumb]:rounded-b-full [&::-webkit-slider-thumb]:bg-white"
        />
        <svg viewBox="0 0 16 12" className="h-3 w-4" aria-hidden="true">
          <path d="M0 4h3l5-4v12L3 8H0z" fill="#e8e8e8" /><path d="M10 3v6M12.500 2v8M15 1v10" stroke="#9b9b8d" strokeWidth="1.500" />
        </svg>
        <div className="h-2.5 w-3 border-2 border-r-0 border-[#777]" />
      </div>
    </div>
  );
}

function Taskbar() {
  return (
    <footer className="flex h-[34px] shrink-0 items-stretch bg-[#dadada] text-[#1c1c1c]">
      <button aria-label="Démarrer" className="flex w-[46px] items-center justify-center bg-[#e4e4e4] pt-1"><FaWindows className="h-4 w-4" color="#000" /></button>
      <label className="flex w-[322px] items-center gap-2.5 bg-white pl-2.5 pt-1">
        <Search className="h-4 w-4 -scale-x-100" color="#333" strokeWidth={1.8} />
        <input aria-label="Recherche" placeholder="Taper ici pour rechercher" className="min-w-0 flex-1 bg-transparent text-[13px] outline-none placeholder:text-[#555]" />
      </label>
      <div className="flex items-stretch pl-px">
        <button aria-label="Cortana" className="flex w-[46px] items-center justify-center pt-1">
          <span className="h-4 w-4 rounded-full border-[3px] border-black bg-white" />
        </button>
        <button aria-label="Vue des tâches" className="flex w-[46px] items-center justify-center pt-1">
          <svg viewBox="0 0 18 18" className="h-[18px] w-[18px]" fill="none" stroke="#222" strokeWidth="1.8"><path d="M2 5h9v8H2zM2 1v2h9V1M2 17v-2h9v2M15 1v3M15 6v5M15 13v4" /></svg>
        </button>
        <button aria-label="Edge" className="flex w-[46px] items-center justify-center pt-1">
          <svg viewBox="0 0 24 24" className="h-6 w-6">
            <defs><linearGradient id="edge" x1="0" y1="1" x2="1" y2="0"><stop offset="0" stopColor="#0c59a4" /><stop offset="0.55" stopColor="#1b9de2" /><stop offset="1" stopColor="#5fd85c" /></linearGradient></defs>
            <path d="M1 12C1 5 6 1 12 1s11 4 11 9c0 4-3 6-6 6-2 0-4-1-3-2 1-2 0-5-4-5-5 0-9 3-9 3z" fill="url(#edge)" />
            <path d="M1 12c2-3 6-4 9-3-4 2-4 9 2 11 4 1 7 0 9-2-2 4-6 5-9 5C6 23 1 19 1 12z" fill="#1266b5" />
            <path d="M1 12c2-4 8-5 11-2-6-1-7 5-5 9 1 2 3 3 5 4C6 23 1 19 1 12z" fill="#1a86d8" />
          </svg>
        </button>
        <button aria-label="Explorateur" className="flex w-[46px] items-center justify-center pt-1">
          <svg viewBox="0 0 22 20" className="h-5 w-[22px]"><path d="M1 1h8l2 3h10v14H1z" fill="#f8d775" /><path d="M1 1h8v3H1z" fill="#e0a040" /><path d="M5 11h13v8h-4v-4H9v4H5z" fill="#3a8fc0" /></svg>
        </button>
        <button aria-label="WavePad" className="flex w-[46px] items-center justify-center bg-[#f3f3f3] pt-1">
          <svg viewBox="0 0 22 20" className="h-5 w-[22px]"><path d="M0 0h22v20H0z" fill="#16181c" /><path d="M1 10h20M4 7v6M8 7v6M12 6v8M16 7v6M19 8v4" stroke="#fff" strokeWidth="2" /><path d="M4 0v4M9 0v4M14 0v4M19 0v4M4 16v4M9 16v4M14 16v4M19 16v4" stroke="#8a98a8" /></svg>
        </button>
        <button aria-label="Bandicam" className="flex w-[46px] items-center justify-center pt-1">
          <span className="h-5 w-5 rounded-full border-4 border-[#1b0d10] bg-[#e2303a]" />
        </button>
      </div>
      <div className="ml-auto flex items-center gap-2 pr-4 pt-1">
        <ChevronUp className="mr-0.5 h-3.5 w-3.5" color="#222" />
        <svg viewBox="0 0 14 16" className="h-4 w-3.5" fill="none" stroke="#333" strokeWidth="1.8"><circle cx="6" cy="8" r="3.500" /><path d="M2 3l3-2h5M2 13l3 2h5M11 6v4" /></svg>
        <svg viewBox="0 0 18 12" className="h-3 w-4" fill="none" stroke="#333" strokeWidth="1.8"><path d="M5 2h10v8H7M15 4h2v4h-2M1 1v4h4V1M3 5v4" /></svg>
        <svg viewBox="0 0 14 14" className="h-3.5 w-3.5" fill="none" stroke="#555" strokeWidth="1.8"><path d="M1 13L13 1v12M5 13c0-2 1-4 2-5M9 13c0-2 0-4 1-6" /></svg>
        <svg viewBox="0 0 18 14" className="mr-1 h-3.5 w-4" fill="none" stroke="#333" strokeWidth="1.600"><path d="M1 5h3l4-4v12L4 9H1zM10 5c1 1 1 3 0 4M12.500 3c2 2 2 6 0 8M15 1c3 3 3 9 0 12" /></svg>
        <time className="w-[58px] text-center text-[10px] leading-[17px]">12:32<br />11/05/2021</time>
        <button aria-label="Notifications" className="ml-2">
          <svg viewBox="0 0 16 16" className="h-4 w-4"><path d="M0 0h16v13h-4v3l-4-3H0z" fill="#000" /><path d="M3 4h9M3 7h9M3 10h4" stroke="#d0d0d0" strokeWidth="1.2" /></svg>
        </button>
      </div>
    </footer>
  );
}

export default function App() {
  return (
    <div className="flex h-screen min-h-[480px] w-full flex-col overflow-hidden bg-[#3f3f3f] font-['Open_Sans','Noto_Sans',sans-serif]">
      <MenuBar />
      <TabRow />
      <Ribbon />
      <main className="flex min-h-0 flex-1">
        <Sidebar />
        <Editor />
      </main>
      <Transport />
      <StatusBar />
      <Taskbar />
    </div>
  );
}
